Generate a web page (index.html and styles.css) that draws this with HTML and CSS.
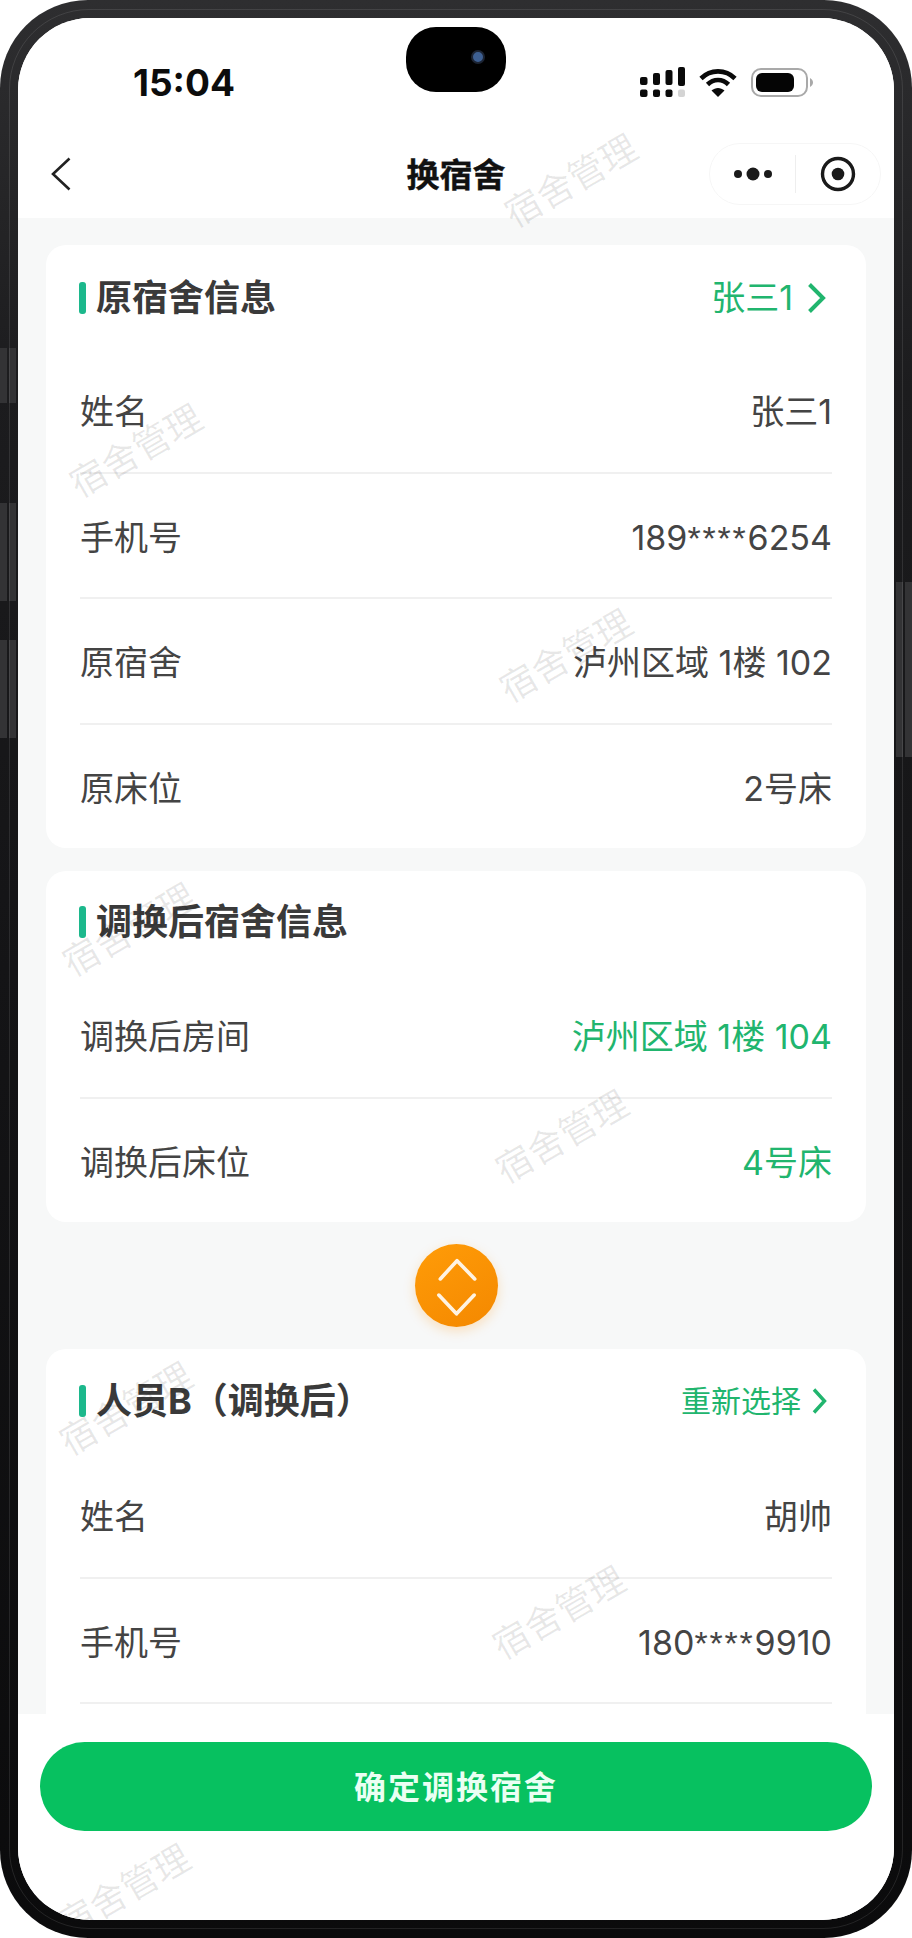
FILE: index.html
```html
<!DOCTYPE html>
<html lang="zh">
<head>
<meta charset="utf-8">
<title>换宿舍</title>
<link rel="stylesheet" href="styles.css">
</head>
<body>
<div class="phone">
  <span class="key key-l1"></span>
  <span class="key key-l2"></span>
  <span class="key key-l3"></span>
  <span class="key key-r1"></span>
  <span class="frame-line"></span>
  <div class="screen">
    <header class="top">
      <div class="status">
        <span class="time">15:04</span>
        <div class="status-icons">
          <svg class="ic-signal" width="45" height="30" viewBox="0 0 45 30"><g fill="#0a0a0a"><rect x="0" y="10" width="7.5" height="8" rx="2"/><rect x="13" y="6" width="7" height="12" rx="2"/><rect x="25.5" y="3" width="7" height="15" rx="2"/><rect x="38" y="0" width="7" height="19" rx="2"/><rect x="0" y="22.5" width="7.5" height="7.5" rx="2"/><rect x="13" y="22.5" width="7" height="7.5" rx="2"/><rect x="25.5" y="22.5" width="7" height="7.5" rx="2"/></g><rect x="38" y="22.5" width="7" height="7.5" rx="2" fill="#d4d4d4"/></svg>
          <svg class="ic-wifi" width="38" height="29" viewBox="0 0 38 29"><g fill="none" stroke="#0a0a0a" stroke-width="4.6"><path d="M2 10.5C11.5 1 26.500 1 36 10.500"/><path d="M8.500 16.500C14.500 10.500 23.500 10.500 29.500 16.500"/></g><path d="M12.500 22.500C16.500 19 21.500 19 25.500 22.500L19 29Z" fill="#0a0a0a"/></svg>
          <svg class="ic-battery" width="62" height="29" viewBox="0 0 62 29"><rect x="1" y="1" width="55" height="27" rx="9" fill="#fff" stroke="#a9a9a9" stroke-width="2"/><rect x="5" y="5" width="38" height="19" rx="6" fill="#050505"/><path d="M59 10C61 11 62 13 62 14.500C62 16 61 18 59 19Z" fill="#a9a9a9"/></svg>
        </div>
        <div class="island"><span class="lens"></span></div>
      </div>
      <nav class="nav">
        <svg class="ic-back" width="20" height="34" viewBox="0 0 20 34"><path d="M18.500 1.500L2 17L18.500 32.500" fill="none" stroke="#222" stroke-width="2.6"/></svg>
        <h1 class="nav-title">换宿舍</h1>
        <div class="capsule">
          <svg class="ic-more" width="38" height="14" viewBox="0 0 38 14"><g fill="#1a1a1a"><circle cx="4" cy="7" r="4"/><circle cx="19" cy="7" r="6.500"/><circle cx="34" cy="7" r="4"/></g></svg>
          <span class="capsule-line"></span>
          <svg class="ic-record" width="36" height="36" viewBox="0 0 36 36"><circle cx="18" cy="18" r="15.500" fill="none" stroke="#1a1a1a" stroke-width="3.400"/><circle cx="18" cy="18" r="6.300" fill="#1a1a1a"/></svg>
        </div>
      </nav>
    </header>

    <main class="content">
      <section class="card">
        <div class="card-head card-head-first">
          <h2 class="card-title">原宿舍信息</h2>
          <a class="head-link">张三1<svg class="ic-go" width="19" height="32" viewBox="0 0 19 32"><path d="M2.500 2.500L16 16L2.500 29.500" fill="none" stroke="#21b56e" stroke-width="4"/></svg></a>
        </div>
        <div class="row"><span>姓名</span><span>张三1</span></div>
        <div class="row"><span>手机号</span><span>189<span class="mask">****</span>6254</span></div>
        <div class="row"><span>原宿舍</span><span>泸州区域 1楼 102</span></div>
        <div class="row"><span>原床位</span><span>2号床</span></div>
      </section>

      <section class="card card-second">
        <div class="card-head card-head-second">
          <h2 class="card-title">调换后宿舍信息</h2>
        </div>
        <div class="row"><span>调换后房间</span><span class="val-green">泸州区域 1楼 104</span></div>
        <div class="row"><span>调换后床位</span><span class="val-green">4号床</span></div>
      </section>

      <div class="swap">
        <div class="swap-btn">
          <svg width="83" height="83" viewBox="0 0 82 82"><g fill="none" stroke="#fff3e2" stroke-width="3.600" stroke-linecap="round" stroke-linejoin="round"><path d="M25 34.500L41.500 16.500L59 34.500"/><path d="M23.500 50.500L41 69L58.500 50.500"/></g></svg>
        </div>
      </div>

      <section class="card">
        <div class="card-head card-head-third">
          <h2 class="card-title">人员B（调换后）</h2>
          <a class="head-link head-link-small">重新选择<svg class="ic-go-small" width="15" height="28" viewBox="0 0 15 28"><path d="M2 2.500L12.500 14L2 25.500" fill="none" stroke="#21b56e" stroke-width="3.400"/></svg></a>
        </div>
        <div class="row"><span>姓名</span><span>胡帅</span></div>
        <div class="row"><span>手机号</span><span>180<span class="mask">****</span>9910</span></div>
        <div class="row"><span>原宿舍</span><span></span></div>
      </section>
    </main>

    <footer class="bottom">
      <button class="confirm">确定调换宿舍</button>
    </footer>

    <div class="marks">
      <span class="mark m0">宿舍管理</span>
      <span class="mark m1">宿舍管理</span>
      <span class="mark m2">宿舍管理</span>
      <span class="mark m3">宿舍管理</span>
      <span class="mark m4">宿舍管理</span>
      <span class="mark m5">宿舍管理</span>
      <span class="mark m6">宿舍管理</span>
      <span class="mark m7">宿舍管理</span>
      <span class="mark m8">宿舍管理</span>
    </div>
  </div>
</div>
</body>
</html>
```

FILE: styles.css
```css
* { box-sizing: border-box; }

html, body { margin: 0; padding: 0; background: #fff; }

body {
  font-family: "Inter", "Noto Sans CJK SC", sans-serif;
  color: #444;
}

.phone {
  position: relative;
  width: 912px;
  height: 1938px;
  padding: 18px;
  border-radius: 88px;
  background: linear-gradient(180deg, #2e2e30 0%, #1c1c1e 20%, #141416 50%, #0b0b0c 100%);
}

.frame-line {
  position: absolute;
  inset: 9px;
  border: 1px solid rgba(255, 255, 255, 0.1);
  border-radius: 80px;
  pointer-events: none;
}

.key {
  position: absolute;
  width: 7px;
  background: #333335;
  box-shadow: 9px 0 0 #333335;
}

.key-l1 { left: 0; top: 348px; height: 55px; }
.key-l2 { left: 0; top: 503px; height: 98px; }
.key-l3 { left: 0; top: 640px; height: 98px; }
.key-r1 { left: 896px; top: 582px; height: 175px; }

.screen {
  position: relative;
  display: flex;
  flex-direction: column;
  width: 876px;
  height: 1902px;
  overflow: hidden;
  border-radius: 72px;
  background: #fff;
}

/* ---------- top bars ---------- */

.top { flex: none; height: 200px; background: #fff; }

.status {
  position: relative;
  display: flex;
  align-items: center;
  justify-content: space-between;
  height: 112px;
  padding: 17px 81px 0 115px;
}

.time {
  font-size: 37px;
  font-weight: 700;
  line-height: 40px;
  color: #0c0c0c;
}

.status-icons { display: flex; align-items: center; gap: 14px; margin-top: -1px; }

.island {
  position: absolute;
  left: 388px;
  top: 9px;
  display: flex;
  align-items: center;
  justify-content: flex-end;
  width: 100px;
  height: 65px;
  padding: 0 21px 0 0;
  border-radius: 30px;
  background: #000;
}

.lens {
  width: 14px;
  height: 14px;
  border: 2px solid #1c2433;
  border-radius: 50%;
  background: #3d5f92;
  transform: translateY(-3px);
}

.nav {
  position: relative;
  display: flex;
  align-items: center;
  height: 88px;
  padding-left: 33px;
}

.nav-title {
  position: absolute;
  left: 0;
  right: 0;
  top: 23px;
  margin: 0;
  font-size: 33px;
  font-weight: 700;
  line-height: 44px;
  text-align: center;
  color: #111;
  -webkit-text-stroke: 0.4px #111;
}

.capsule {
  position: absolute;
  top: 13px;
  left: 691px;
  display: flex;
  align-items: center;
  width: 172px;
  height: 62px;
  padding-left: 24px;
  border: 1px solid #f6f6f6;
  border-radius: 31px;
}

.capsule-line {
  width: 1px;
  height: 38px;
  margin-left: 23px;
  background: #eee;
}

.ic-record { margin-left: 24px; }

/* ---------- content ---------- */

.content {
  flex: none;
  height: 1496px;
  padding: 27px 28px 0;
  overflow: hidden;
  background: #f7f8f8;
}

.card {
  padding: 0 34px;
  border-radius: 20px;
  background: #fff;
}

.card-second { margin-top: 23px; }

.card-head {
  display: flex;
  align-items: center;
  justify-content: space-between;
}

.card-head-first { height: 103px; padding-top: 2px; }
.card-head-second { height: 102.500px; }
.card-head-third { height: 104px; padding-bottom: 1px; }

.card-title {
  position: relative;
  margin: 0 0 0 -1px;
  padding-left: 17px;
  font-size: 36px;
  font-weight: 700;
  line-height: 46px;
  color: #3a3a3a;
}

.card-title::before {
  content: "";
  position: absolute;
  left: 0;
  top: 7px;
  width: 7px;
  height: 32px;
  border-radius: 3px;
  background: #1cb88c;
}

.head-link {
  display: flex;
  align-items: center;
  gap: 14px;
  margin-right: 6px;
  font-size: 34px;
  line-height: 46px;
  color: #21b56e;
}

.head-link-small { gap: 11px; margin-right: 5px; font-size: 30px; }

.row {
  display: flex;
  align-items: center;
  justify-content: space-between;
  height: 125.500px;
  padding-top: 5px;
  border-bottom: 2px solid #f0f0f0;
  font-size: 34px;
  line-height: 46px;
  color: #444;
}

.card > .row:last-child { height: 123px; border-bottom: 0; }

.mask { font-family: "Liberation Sans", sans-serif; letter-spacing: 1.800px; }

.val-green { color: #21b56e; }

.swap {
  display: flex;
  align-items: center;
  justify-content: center;
  height: 127.500px;
}

.swap-btn {
  width: 83px;
  height: 83px;
  border-radius: 50%;
  background: linear-gradient(150deg, #ff9c08 0%, #f48800 100%);
  box-shadow: 0 4px 12px rgba(255, 150, 20, 0.25);
}

.swap-btn svg { display: block; }

/* ---------- bottom ---------- */

.bottom {
  flex: none;
  height: 206px;
  padding: 28px 22px 0;
  background: #fff;
}

.confirm {
  display: block;
  width: 832px;
  height: 89px;
  padding: 0 0 3px;
  border: 0;
  border-radius: 45px;
  background: #07c160;
  font-family: inherit;
  font-size: 32px;
  font-weight: 700;
  letter-spacing: 2px;
  color: #eafff3;
}

/* ---------- watermark ---------- */

.marks { position: absolute; inset: 0; pointer-events: none; }

.mark {
  position: absolute;
  width: 146px;
  margin: -20px 0 0 -73px;
  font-size: 36.500px;
  line-height: 40px;
  white-space: nowrap;
  color: rgba(0, 0, 0, 0.09);
  transform: rotate(-30deg);
}

.m0 { left: 122px; top: -53px; }
.m1 { left: 553px; top: 163px; }
.m2 { left: 118px; top: 433px; }
.m3 { left: 548px; top: 638px; }
.m4 { left: 111px; top: 912px; }
.m5 { left: 544px; top: 1119px; }
.m6 { left: 108px; top: 1391px; }
.m7 { left: 541px; top: 1595px; }
.m8 { left: 106px; top: 1873px; }
```
